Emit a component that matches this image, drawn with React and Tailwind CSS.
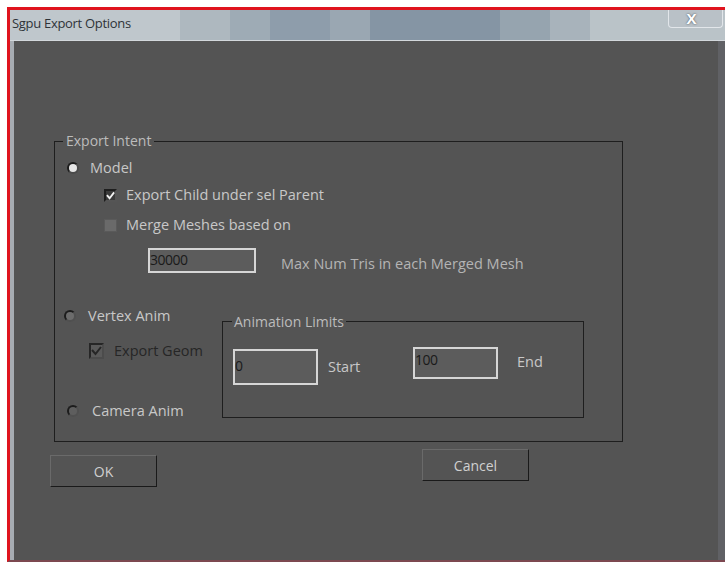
import React from 'react';

const font = { fontFamily: '"Open Sans", "Noto Sans", sans-serif' };

// title bar bands, left to right
const bands = [
  { w: 'w-[50px]', bg: 'bg-[#aeb8bf]' },
  { w: 'w-[40px]', bg: 'bg-[#9eabb5]' },
  { w: 'w-[60px]', bg: 'bg-[#8e9dab]' },
  { w: 'w-[40px]', bg: 'bg-[#9aa7b2]' },
  { w: 'w-[130px]', bg: 'bg-[#8595a4]' },
  { w: 'w-[50px]', bg: 'bg-[#96a4af]' },
  { w: 'w-[40px]', bg: 'bg-[#a8b3bb]' },
];

function Radio({ state }) {
  // state: 'on' | 'off' | 'dim'
  if (state === 'on') {
    return (
      <span className="w-[12px] h-[12px] rounded-full border-[2px] border-[#1c1c1c] border-r-[#4a4a4a] border-b-[#4a4a4a] bg-[#e6e6e6] shrink-0" />
    );
  }
  return (
    <span
      className={
        'w-[12px] h-[12px] rounded-full border-[2px] border-[#1c1c1c] border-r-[#505050] border-b-[#505050] shrink-0 ' +
        (state === 'dim' ? 'bg-[#6c6c6c]' : 'bg-[#5e5e5e]')
      }
    />
  );
}

function Check({ checked, disabled }) {
  if (disabled) {
    return (
      <span className="w-[15px] h-[16px] border-[2px] border-[#262626] border-r-[#4c4c4c] border-b-[#4c4c4c] bg-[#5a5a5a] flex items-center justify-center shrink-0">
        <svg width="11" height="10" viewBox="0 0 11 10">
          <path d="M1 4 L4.5 8 L10 1" fill="none" stroke="#262626" strokeWidth="2" />
        </svg>
      </span>
    );
  }
  return (
    <span
      className={
        'w-[13px] h-[13px] flex items-center justify-center shrink-0 ' +
        (checked
          ? 'bg-[#3a3a3a] border-[2px] border-[#1e1e1e] border-r-[#555] border-b-[#555]'
          : 'bg-[#6a6a6a] border border-[#5a5a5a]')
      }
    >
      {checked && (
        <svg width="10" height="9" viewBox="0 0 10 9">
          <path d="M1 4 L4 7.5 L9 1" fill="none" stroke="#f2f2f2" strokeWidth="2" />
        </svg>
      )}
    </span>
  );
}

function Field({ value, className }) {
  return (
    <div
      className={
        'border-[2px] border-[#d6d6d6] bg-[#5c5c5c] text-[#1a1a1a] text-[14px] leading-[18px] tracking-[-0.5px] shrink-0 ' +
        className
      }
    >
      {value}
    </div>
  );
}

function Button({ children, className }) {
  return (
    <button
      className={
        'h-[32px] w-[107px] bg-[#545454] border border-[#6a6a6a] border-r-[#1a1a1a] border-b-[#1a1a1a] text-[#d0d0d0] text-[14px] ' +
        className
      }
    >
      {children}
    </button>
  );
}

export default function App() {
  return (
    <div className="w-[725px] h-[562px] bg-white pl-[7px] pt-[7px] overflow-hidden" style={font}>
      <div className="h-full flex flex-col border-l-[3px] border-t-[3px] border-b-[2px] border-l-[#e0141e] border-t-[#e0141e] border-b-[#7c4850]">
        {/* title bar: glass strip, darker band across the middle */}
        <div className="h-[31px] flex shrink-0 border-b border-b-[#d3d8dc] bg-[#bcc4c9]">
          <div className="w-[170px] flex items-start bg-[#bfc7cc]">
            <span className="pl-[2px] pt-[3px] text-[13px] leading-[20px] tracking-[-0.3px] text-[#2e3338]">Sgpu Export Options</span>
          </div>
          {bands.map((b, i) => (
            <div key={i} className={b.w + ' ' + b.bg} />
          ))}
          <div className="flex-1 flex items-start justify-end bg-[#bac3c8]">
            <div className="mr-[2px] w-[55px] h-[18px] border border-t-0 border-[#e2e6ea] rounded-b-[4px] bg-[#b9c1c7] flex items-center justify-center">
              <span className="text-[15px] font-bold leading-none text-white [text-shadow:0_0_2px_#3a4048] -ml-[8px]">X</span>
            </div>
          </div>
        </div>

        {/* dialog body */}
        <div className="flex-1 bg-[#545454] border-l-[4px] border-l-[#a7acb2] border-r-[7px] border-r-[#606165] flex flex-col">
          <fieldset className="ml-[40px] mt-[91px] w-[569px] h-[310px] border border-[#1e1e1e] shrink-0">
            <legend className="ml-[8px] px-[3px] text-[14px] leading-[18px] text-[#bcbcbc]">Export Intent</legend>

            <div className="flex items-center h-[18px] mt-[9px] pl-[12px] gap-[11px]">
              <Radio state="on" />
              <span className="text-[14.5px] text-[#c8c8c8]">Model</span>
            </div>
            <div className="flex items-center h-[18px] mt-[9px] pl-[49px] gap-[9px]">
              <Check checked />
              <span className="text-[14.5px] text-[#c8c8c8]">Export Child under sel Parent</span>
            </div>
            <div className="flex items-center h-[18px] mt-[12px] pl-[49px] gap-[9px]">
              <Check />
              <span className="text-[14.5px] text-[#c8c8c8]">Merge Meshes based on</span>
            </div>
            <div className="flex items-start mt-[14px] pl-[93px]">
              <Field value="30000" className="w-[108px] h-[25px] pt-[1px]" />
              <span className="ml-[25px] mt-[5px] text-[14.5px] text-[#b4b4b4]">Max Num Tris in each Merged Mesh</span>
            </div>

            <div className="flex items-start">
              {/* mode radios */}
              <div className="w-[167px] flex flex-col shrink-0">
                <div className="flex items-center h-[18px] mt-[32px] pl-[9px] gap-[12px]">
                  <Radio state="dim" />
                  <span className="text-[14.5px] text-[#c8c8c8]">Vertex Anim</span>
                </div>
                <div className="flex items-center h-[18px] mt-[17px] pl-[34px] gap-[10px]">
                  <Check disabled />
                  <span className="text-[14.5px] text-[#262626]">Export Geom</span>
                </div>
                <div className="flex items-center h-[18px] mt-[42px] pl-[12px] gap-[13px]">
                  <Radio state="off" />
                  <span className="text-[14.5px] text-[#c8c8c8]">Camera Anim</span>
                </div>
              </div>

              <fieldset className="mt-[38px] w-[362px] h-[105px] border border-[#1e1e1e] shrink-0">
                <legend className="ml-[9px] px-[2px] text-[14px] leading-[18px] text-[#bcbcbc]">Animation Limits</legend>
                <div className="flex items-start pl-[10px]">
                  <div className="w-[180px] flex items-start shrink-0">
                    <Field value="0" className="mt-[18px] w-[85px] h-[36px] pt-[6px]" />
                    <span className="ml-[10px] mt-[25px] text-[14.5px] text-[#c8c8c8]">Start</span>
                  </div>
                  <Field value="100" className="mt-[16px] w-[85px] h-[32px] pt-[2px]" />
                  <span className="ml-[19px] mt-[20px] text-[14.5px] text-[#c8c8c8]">End</span>
                </div>
              </fieldset>
            </div>
          </fieldset>

          <div className="flex items-start">
            <Button className="ml-[36px] mt-[13px]">OK</Button>
            <Button className="ml-[265px] mt-[7px]">Cancel</Button>
          </div>
        </div>
      </div>
    </div>
  );
}
